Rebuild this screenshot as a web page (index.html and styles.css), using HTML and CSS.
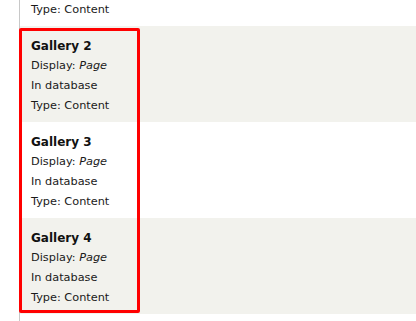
FILE: index.html
```html
<!doctype html>
<html>
  <head>
    <title>Views</title>
    <link rel="stylesheet" href="styles.css">
  </head>
  <body>
    <div class="view-list">
      <div class="view-row">
        <div class="view-type">Type: Content</div>
      </div>
      <div class="view-row odd">
        <div class="view-name">Gallery 2</div>
        <div>Display: <em>Page</em></div>
        <div>In database</div>
        <div>Type: Content</div>
      </div>
      <div class="view-row">
        <div class="view-name">Gallery 3</div>
        <div>Display: <em>Page</em></div>
        <div>In database</div>
        <div>Type: Content</div>
      </div>
      <div class="view-row odd">
        <div class="view-name">Gallery 4</div>
        <div>Display: <em>Page</em></div>
        <div>In database</div>
        <div>Type: Content</div>
      </div>
      <div class="view-end"></div>
      <div class="highlight"></div>
    </div>
  </body>
</html>
```

FILE: styles.css
```css
html, body {
  margin: 0;
  background: #fff;
}
body {
  font-family: "DejaVu Sans", Verdana, sans-serif;
  font-size: 11.3px;
  line-height: 20px;
  color: #1a1a1a;
}
.view-list {
  position: relative;
  margin-left: 19px;
  border-left: 1px solid #c8c8c8;
}
.view-row {
  padding: 10px 11px 6px;
}
.view-row:first-child {
  padding-top: 0;
  height: 20px;
}
.view-row.odd {
  background: #f2f2ed;
}
.view-name {
  font-weight: bold;
  font-size: 12px;
  color: #111;
}
.view-list em {
  font-style: italic;
}
.view-end {
  height: 8px;
}
.highlight {
  position: absolute;
  left: -1px;
  top: 28px;
  width: 121px;
  height: 285px;
  box-sizing: border-box;
  border: 3px solid #ff0000;
  border-radius: 2px;
}
```
